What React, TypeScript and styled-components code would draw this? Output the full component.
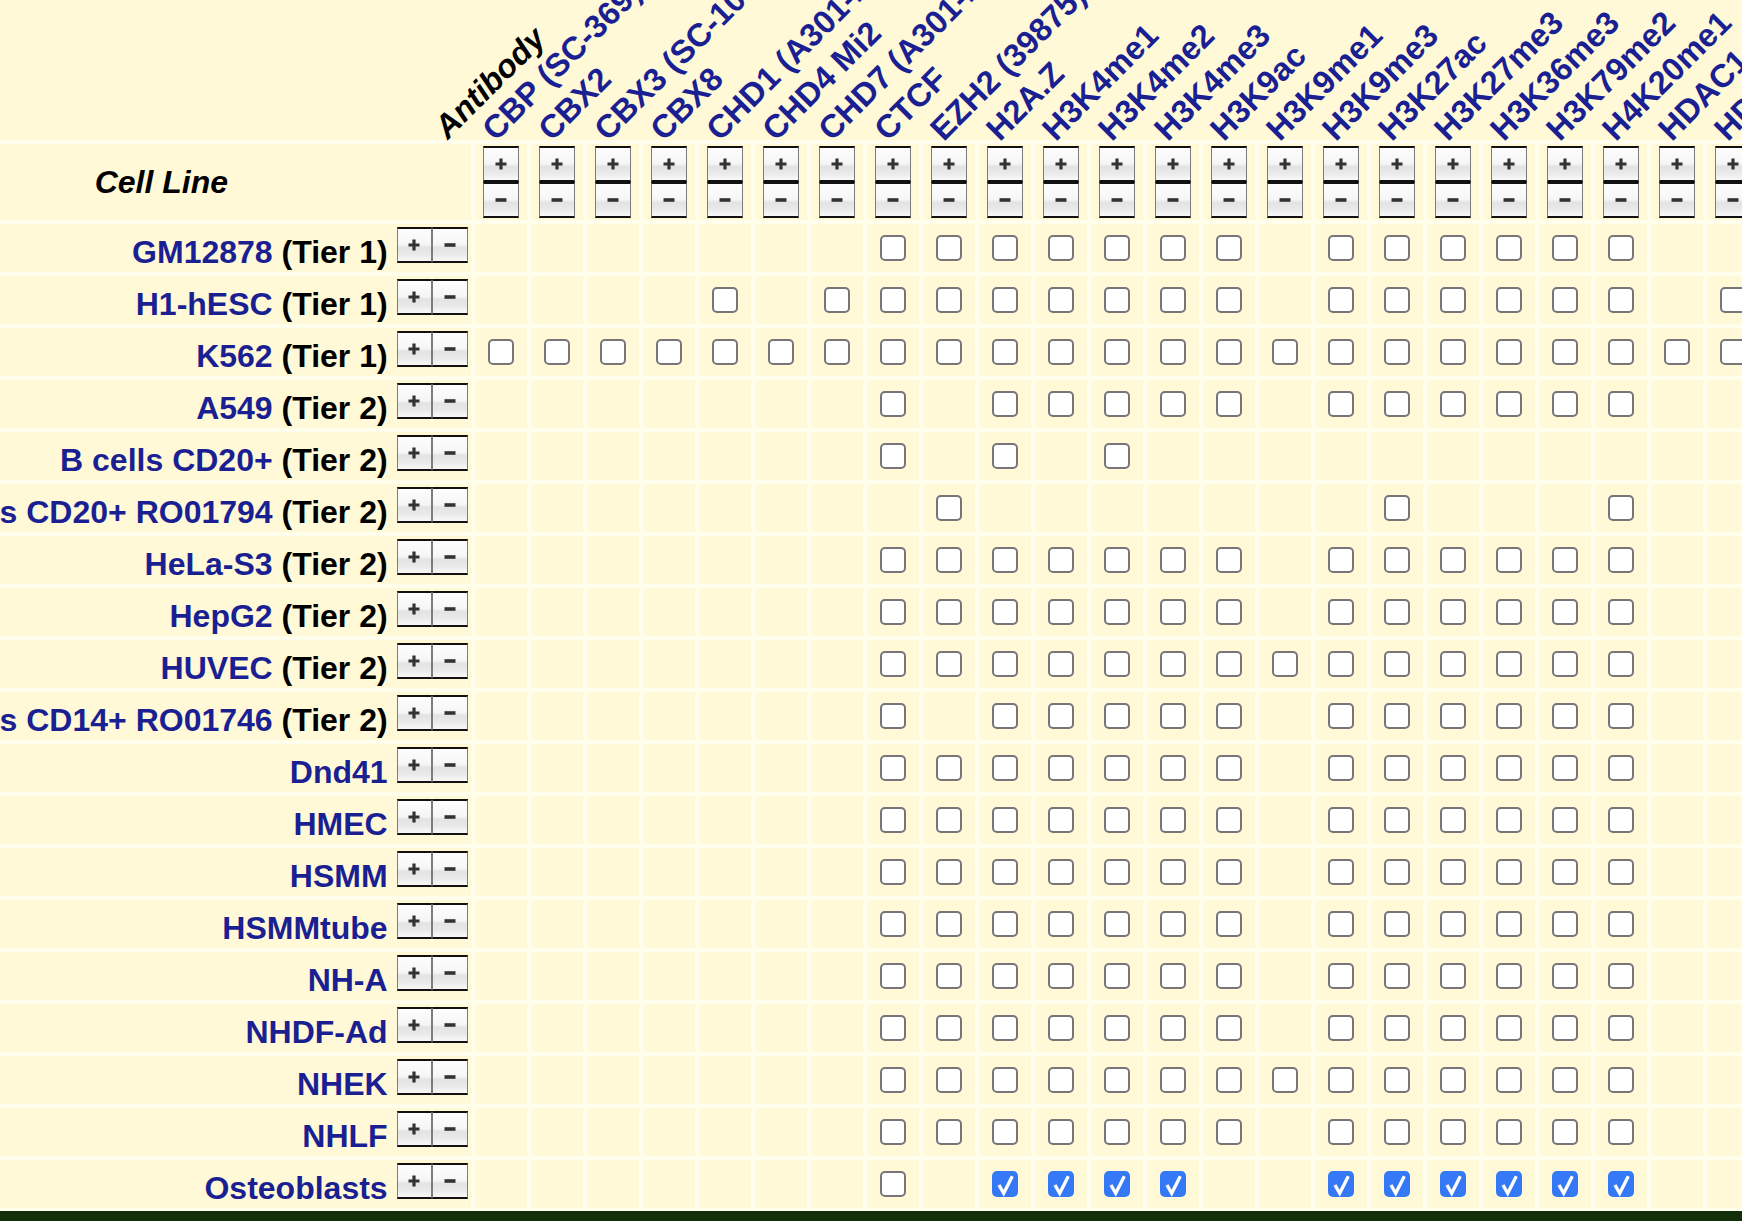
import React from 'react';
import styled, { createGlobalStyle } from 'styled-components';

const GlobalStyle = createGlobalStyle`
  html, body {
    margin: 0;
    padding: 0;
    overflow: hidden;
    background: #ffffff;
  }
  body {
    font-family: "Liberation Sans", Arial, Helvetica, sans-serif;
  }
`;

const COLS = '471px repeat(23, 52px)';

const Page = styled.div`
  width: max-content;
  background: #fff9d8;
  font-weight: bold;
  font-size: 32px;
`;

const HeaderRow = styled.div`
  display: grid;
  grid-template-columns: ${COLS};
  column-gap: 4px;
  height: 140px;
`;

const CornerHead = styled.div`
  display: flex;
  align-items: flex-end;
  padding-left: 448px;
`;

const ColHead = styled.div`
  display: flex;
  align-items: flex-end;
  padding-left: 21px;
`;

// label is turned about its left baseline point
const Rotated = styled.span<{ $italic?: boolean; $drop: number }>`
  display: block;
  flex-shrink: 0;
  white-space: nowrap;
  font-size: 32.5px;
  line-height: 32.5px;
  height: 32.5px;
  margin-bottom: ${p => p.$drop}px;
  transform-origin: 0 27.5px;
  transform: rotate(-45deg);
  font-style: ${p => (p.$italic ? 'italic' : 'normal')};
  color: ${p => (p.$italic ? '#000' : '#1a1f92')};
`;

const Matrix = styled.div`
  display: grid;
  grid-template-columns: ${COLS};
  grid-template-rows: 76px repeat(19, 48px);
  gap: 4px;
  padding: 4px 0 3px;
  background: #fffdec;
`;

const Cell = styled.div`
  background: #fff9d8;
  display: flex;
  align-items: center;
  justify-content: center;
`;

const LabelCell = styled.div`
  background: #fff9d8;
  display: flex;
  justify-content: flex-end;
  align-items: flex-end;
  padding: 0 3px 9.3px 0;
`;

const CellLineHead = styled.div`
  background: #fff9d8;
  display: flex;
  justify-content: flex-end;
  align-items: center;
  padding-right: 243px;
  font-style: italic;
  color: #000;
  line-height: 32px;
`;

const LabelText = styled.span`
  flex-shrink: 0;
  white-space: nowrap;
  line-height: 32px;
  margin-bottom: -4.9px;
  color: #000;
`;

const CellName = styled.span`
  color: #1a1f92;
`;

const ButtonPair = styled.span<{ $vertical?: boolean }>`
  display: flex;
  flex-shrink: 0;
  flex-direction: ${p => (p.$vertical ? 'column' : 'row')};
  margin-left: ${p => (p.$vertical ? 0 : 9)}px;
`;

const PairButton = styled.button`
  width: 35.7px;
  height: 35.7px;
  padding: 0;
  margin: 0;
  display: flex;
  align-items: center;
  justify-content: center;
  border-style: solid;
  border-width: 2px 1.5px;
  border-color: #111 #7c7c7c;
  background: linear-gradient(
    to bottom,
    #fdfdfd 0%,
    #f6f6f6 48%,
    #e3e3e3 58%,
    #e9e9e9 78%,
    #f8f8f8 100%
  );
  cursor: pointer;
`;

const Box = styled.span<{ $checked?: boolean }>`
  width: 26px;
  height: 26px;
  box-sizing: border-box;
  border-radius: 5px;
  display: flex;
  align-items: center;
  justify-content: center;
  background: ${p => (p.$checked ? '#3478f6' : '#ffffff')};
  border: ${p => (p.$checked ? 'none' : '2px solid #767676')};
`;

const FooterBar = styled.div`
  height: 10px;
  background: #132f0a;
`;

const Plus = () => (
  <svg width="12" height="12" viewBox="0 0 12 12">
    <path d="M6 0.5V11.5M0.5 6H11.5" stroke="#333" strokeWidth="3.2" />
  </svg>
);

const Minus = () => (
  <svg width="12" height="12" viewBox="0 0 12 12">
    <path d="M0.5 6H11.5" stroke="#333" strokeWidth="3.6" />
  </svg>
);

const Tick = () => (
  <svg width="26" height="26" viewBox="0 0 26 26">
    <polyline points="7,14 11.7,22.3 20.3,5.2" fill="none" stroke="#fff" strokeWidth="3.3" />
  </svg>
);

const antibodies = [
  'CBP (SC-369)', 'CBX2', 'CBX3 (SC-101004)', 'CBX8', 'CHD1 (A301-218A)', 'CHD4 Mi2',
  'CHD7 (A301-223A)', 'CTCF', 'EZH2 (39875)', 'H2A.Z', 'H3K4me1', 'H3K4me2', 'H3K4me3',
  'H3K9ac', 'H3K9me1', 'H3K9me3', 'H3K27ac', 'H3K27me3', 'H3K36me3', 'H3K79me2',
  'H4K20me1', 'HDAC1 (SC-6298)', 'HDAC2 (A300-705A)',
];

const range = (a: number, b: number) => Array.from({ length: b - a + 1 }, (_, i) => a + i);

// usual histone set: CTCF..H3K9ac, H3K9me3..H4K20me1
const STD = [7, 8, 9, 10, 11, 12, 13, 15, 16, 17, 18, 19, 20];
const NO_EZH2 = STD.filter(c => c !== 8);

interface CellLine {
  name: string;
  tier?: number;
  boxes: number[];
  checked?: number[];
}

const cellLines: CellLine[] = [
  { name: 'GM12878', tier: 1, boxes: STD },
  { name: 'H1-hESC', tier: 1, boxes: [4, 6, ...STD, 22] },
  { name: 'K562', tier: 1, boxes: range(0, 22) },
  { name: 'A549', tier: 2, boxes: NO_EZH2 },
  { name: 'B cells CD20+', tier: 2, boxes: [7, 9, 11] },
  { name: 'B cells CD20+ RO01794', tier: 2, boxes: [8, 16, 20] },
  { name: 'HeLa-S3', tier: 2, boxes: STD },
  { name: 'HepG2', tier: 2, boxes: STD },
  { name: 'HUVEC', tier: 2, boxes: range(7, 20) },
  { name: 'Monocytes CD14+ RO01746', tier: 2, boxes: NO_EZH2 },
  { name: 'Dnd41', boxes: STD },
  { name: 'HMEC', boxes: STD },
  { name: 'HSMM', boxes: STD },
  { name: 'HSMMtube', boxes: STD },
  { name: 'NH-A', boxes: STD },
  { name: 'NHDF-Ad', boxes: STD },
  { name: 'NHEK', boxes: range(7, 20) },
  { name: 'NHLF', boxes: STD },
  {
    name: 'Osteoblasts',
    boxes: [7, 9, 10, 11, 12, 15, 16, 17, 18, 19, 20],
    checked: [9, 10, 11, 12, 15, 16, 17, 18, 19, 20],
  },
];

const PlusMinus: React.FC<{ vertical?: boolean }> = ({ vertical }) => (
  <ButtonPair $vertical={vertical}>
    <PairButton title="select all"><Plus /></PairButton>
    <PairButton title="clear all"><Minus /></PairButton>
  </ButtonPair>
);

const App: React.FC = () => {
  return (
    <>
      <GlobalStyle />
      <Page>
        <HeaderRow>
          <CornerHead>
            <Rotated $italic $drop={-5}>Antibody</Rotated>
          </CornerHead>
          {antibodies.map(ab => (
            <ColHead key={ab}>
              <Rotated $drop={-7.3}>{ab}</Rotated>
            </ColHead>
          ))}
        </HeaderRow>

        <Matrix>
          <CellLineHead>Cell Line</CellLineHead>
          {antibodies.map(ab => (
            <Cell key={ab}>
              <PlusMinus vertical />
            </Cell>
          ))}

          {cellLines.map(line => (
            <React.Fragment key={line.name}>
              <LabelCell>
                <LabelText>
                  <CellName>{line.name}</CellName>
                  {line.tier ? ` (Tier ${line.tier})` : ''}
                </LabelText>
                <PlusMinus />
              </LabelCell>
              {antibodies.map((ab, i) => (
                <Cell key={ab}>
                  {line.boxes.includes(i) && (
                    <Box $checked={line.checked?.includes(i)}>
                      {line.checked?.includes(i) && <Tick />}
                    </Box>
                  )}
                </Cell>
              ))}
            </React.Fragment>
          ))}
        </Matrix>
        <FooterBar />
      </Page>
    </>
  );
};

export default App;
